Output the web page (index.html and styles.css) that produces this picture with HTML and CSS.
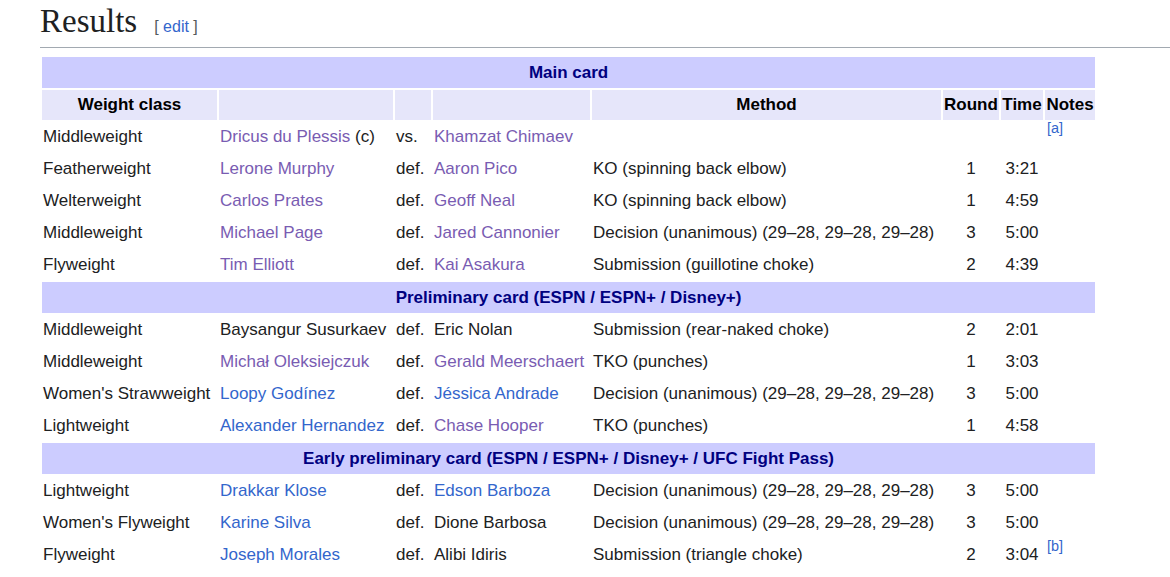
FILE: index.html
```html
<!DOCTYPE html>
<html lang="en">
<head>
<meta charset="utf-8">
<title>Results</title>
<link rel="stylesheet" href="styles.css">
</head>
<body>
<div class="page">
  <h2 class="heading"><span class="title">Results</span><span class="editsection"><span class="br">[</span> <a href="#" class="link">edit</a> <span class="br">]</span></span></h2>
  <table class="results">
    <colgroup>
      <col class="c-weight"><col class="c-win"><col class="c-def"><col class="c-lose"><col class="c-method"><col class="c-round"><col class="c-time"><col class="c-notes">
    </colgroup>
    <tbody>
      <tr class="card"><th colspan="8">Main card</th></tr>
      <tr class="cols"><th>Weight class</th><th></th><th></th><th></th><th>Method</th><th>Round</th><th>Time</th><th>Notes</th></tr>
      <tr><td>Middleweight</td><td><a href="#" class="visited">Dricus du Plessis</a> (c)</td><td>vs.</td><td><a href="#" class="visited">Khamzat Chimaev</a></td><td></td><td class="num"></td><td class="num"></td><td class="note"><sup><a href="#" class="link">[a]</a></sup></td></tr>
      <tr><td>Featherweight</td><td><a href="#" class="visited">Lerone Murphy</a></td><td>def.</td><td><a href="#" class="visited">Aaron Pico</a></td><td>KO (spinning back elbow)</td><td class="num">1</td><td class="num">3:21</td><td class="note"></td></tr>
      <tr><td>Welterweight</td><td><a href="#" class="visited">Carlos Prates</a></td><td>def.</td><td><a href="#" class="visited">Geoff Neal</a></td><td>KO (spinning back elbow)</td><td class="num">1</td><td class="num">4:59</td><td class="note"></td></tr>
      <tr><td>Middleweight</td><td><a href="#" class="visited">Michael Page</a></td><td>def.</td><td><a href="#" class="visited">Jared Cannonier</a></td><td>Decision (unanimous) (29–28, 29–28, 29–28)</td><td class="num">3</td><td class="num">5:00</td><td class="note"></td></tr>
      <tr><td>Flyweight</td><td><a href="#" class="visited">Tim Elliott</a></td><td>def.</td><td><a href="#" class="visited">Kai Asakura</a></td><td>Submission (guillotine choke)</td><td class="num">2</td><td class="num">4:39</td><td class="note"></td></tr>
      <tr class="card"><th colspan="8">Preliminary card (ESPN / ESPN+ / Disney+)</th></tr>
      <tr><td>Middleweight</td><td>Baysangur Susurkaev</td><td>def.</td><td>Eric Nolan</td><td>Submission (rear-naked choke)</td><td class="num">2</td><td class="num">2:01</td><td class="note"></td></tr>
      <tr><td>Middleweight</td><td><a href="#" class="visited">Michał Oleksiejczuk</a></td><td>def.</td><td><a href="#" class="visited">Gerald Meerschaert</a></td><td>TKO (punches)</td><td class="num">1</td><td class="num">3:03</td><td class="note"></td></tr>
      <tr><td>Women's Strawweight</td><td><a href="#" class="link">Loopy Godínez</a></td><td>def.</td><td><a href="#" class="link">Jéssica Andrade</a></td><td>Decision (unanimous) (29–28, 29–28, 29–28)</td><td class="num">3</td><td class="num">5:00</td><td class="note"></td></tr>
      <tr><td>Lightweight</td><td><a href="#" class="link">Alexander Hernandez</a></td><td>def.</td><td><a href="#" class="visited">Chase Hooper</a></td><td>TKO (punches)</td><td class="num">1</td><td class="num">4:58</td><td class="note"></td></tr>
      <tr class="card"><th colspan="8">Early preliminary card (ESPN / ESPN+ / Disney+ / UFC Fight Pass)</th></tr>
      <tr><td>Lightweight</td><td><a href="#" class="link">Drakkar Klose</a></td><td>def.</td><td><a href="#" class="link">Edson Barboza</a></td><td>Decision (unanimous) (29–28, 29–28, 29–28)</td><td class="num">3</td><td class="num">5:00</td><td class="note"></td></tr>
      <tr><td>Women's Flyweight</td><td><a href="#" class="link">Karine Silva</a></td><td>def.</td><td>Dione Barbosa</td><td>Decision (unanimous) (29–28, 29–28, 29–28)</td><td class="num">3</td><td class="num">5:00</td><td class="note"></td></tr>
      <tr><td>Flyweight</td><td><a href="#" class="link">Joseph Morales</a></td><td>def.</td><td>Alibi Idiris</td><td>Submission (triangle choke)</td><td class="num">2</td><td class="num">3:04</td><td class="note"><sup><a href="#" class="link">[b]</a></sup></td></tr>
    </tbody>
  </table>
</div>
</body>
</html>
```

FILE: styles.css
```css
html, body {
  margin: 0;
  padding: 0;
  background: #ffffff;
}

body {
  color: #202122;
  font-family: "Liberation Sans", Arial, sans-serif;
  overflow: hidden;
}

.page {
  padding-left: 40px;
}

.heading {
  margin: 0 0 7px 0;
  padding: 2px 0 0 0;
  height: 45px;
  border-bottom: 1px solid #a2a9b1;
  font-family: "Liberation Serif", "Times New Roman", serif;
  font-size: 33px;
  font-weight: normal;
  line-height: 38px;
  white-space: nowrap;
  overflow: hidden;
  box-sizing: content-box;
}

.title {
  color: #202122;
}

.editsection {
  margin-left: 17px;
  font-family: "Liberation Sans", Arial, sans-serif;
  font-size: 16px;
  line-height: 1;
}

.editsection .br {
  color: #54595d;
}

a {
  text-decoration: none;
}

.link {
  color: #3366cc;
}

.visited {
  color: #795cb2;
}

.results {
  table-layout: fixed;
  width: 1057px;
  border-collapse: separate;
  border-spacing: 2px;
  font-size: 17px;
  color: #202122;
}

.c-weight { width: 175px; }
.c-win { width: 174px; }
.c-def { width: 36px; }
.c-lose { width: 157px; }
.c-method { width: 349px; }
.c-round { width: 56px; }
.c-time { width: 42px; }
.c-notes { width: 50px; }

.results td,
.results th {
  padding: 1px;
  line-height: 28px;
  vertical-align: middle;
  white-space: nowrap;
  overflow: visible;
}

.results td {
  text-align: left;
}

.results .card th {
  background: #ccccff;
  color: #000080;
  font-weight: bold;
  text-align: center;
  line-height: 29px;
}

.results .cols th {
  background: #e6e6fa;
  color: #000000;
  font-weight: bold;
  text-align: center;
}

.results td.num {
  text-align: center;
}

.results td.note {
  text-align: left;
  padding-left: 2px;
}

.note sup {
  font-size: 85%;
  line-height: 1;
  vertical-align: super;
  position: relative;
  top: -2px;
}
```
